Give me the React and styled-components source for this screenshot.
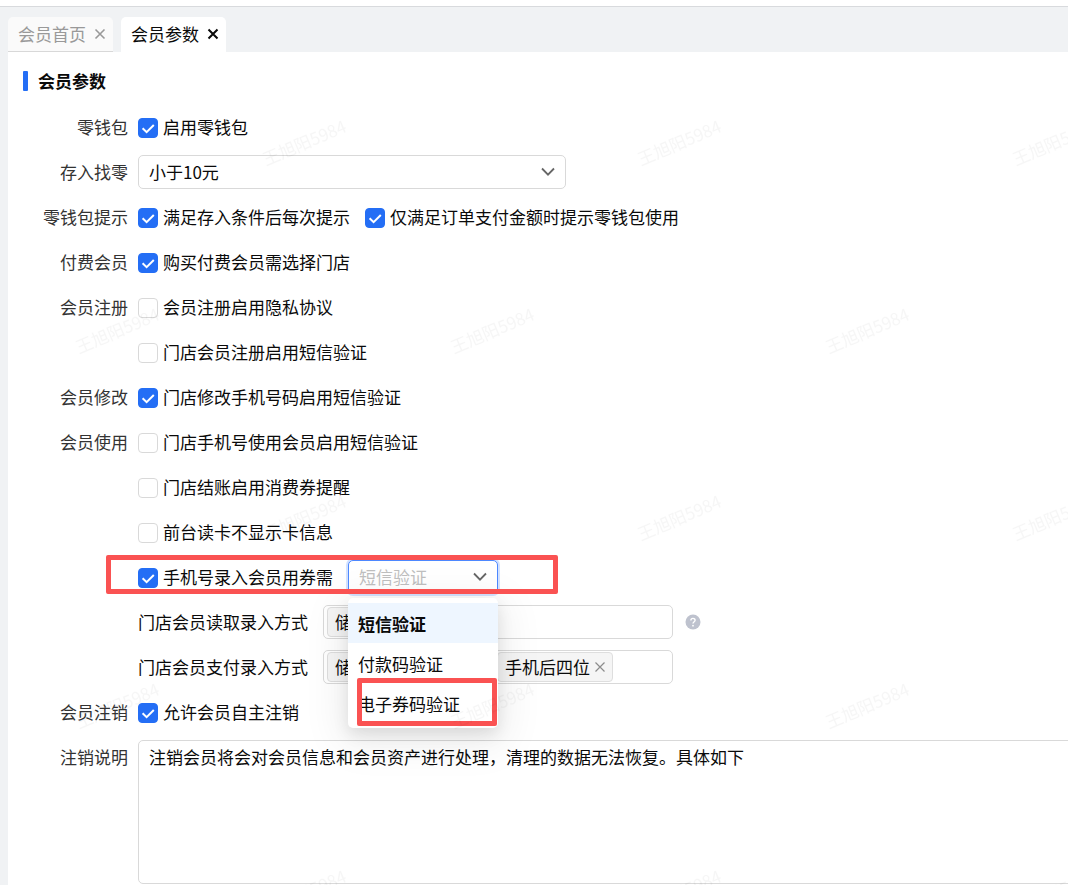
import React from 'react';
import styled, { createGlobalStyle } from 'styled-components';

const GlobalStyle = createGlobalStyle`
	* {
		box-sizing: border-box;
	}
	body {
		margin: 0;
		background: #f0f2f4;
		color: #0a0a0a;
		font-family: 'Noto Sans CJK SC', 'Noto Sans', sans-serif;
		font-size: 17px;
		overflow: hidden;
	}
	button, select, textarea, input {
		margin: 0;
		font: inherit;
		color: inherit;
	}
`;

const Page = styled.div`
	min-height: 100vh;
	display: flex;
	flex-direction: column;
`;
const TopBar = styled.div`
	height: 7px;
	background: #ffffff;
	border-bottom: 1px solid #d8dadd;
`;
const TabBar = styled.nav`
	display: flex;
	gap: 8px;
	padding: 10px 8px 0;
`;
const Tab = styled.div`
	display: flex;
	align-items: center;
	gap: 8px;
	height: 35px;
	padding: 0 7px 0 10px;
	border-radius: 5px 5px 0 0;
	border-bottom: 1px solid ${({ $active }) => ($active ? '#ffffff' : '#d8d8d8')};
	background: ${({ $active }) => ($active ? '#ffffff' : '#fafafa')};
	color: ${({ $active }) => ($active ? '#0a0a0a' : '#999999')};
`;
const TabLink = styled.a`
	color: inherit;
	line-height: 36px;
	text-decoration: none;
`;
const CloseButton = styled.button`
	display: flex;
	padding: 0;
	border: 0;
	background: none;
	color: inherit;
`;
const Panel = styled.main`
	flex: 1;
	margin-left: 8px;
	background: #ffffff;
	overflow: hidden;
`;
const Title = styled.h1`
	display: flex;
	align-items: center;
	gap: 10px;
	margin: 0;
	padding: 15px 15px 15px;
	font-size: 17px;
	line-height: 28px;
	font-weight: bold;
	&::before {
		content: '';
		width: 5px;
		height: 20px;
		border-radius: 1px;
		background: #246ef5;
	}
`;
const Form = styled.form`
	display: flex;
	flex-direction: column;
	gap: 9px;
`;
const Row = styled.div`
	position: relative;
	display: flex;
	align-items: flex-start;
	gap: 10px;
	min-height: 36px;
`;
const RowLabel = styled.label`
	flex: 0 0 120px;
	text-align: right;
	line-height: 34px;
	color: #333333;
`;
const Controls = styled.div`
	flex: 1;
	min-width: 0;
	display: flex;
	gap: 15px;
`;
const CheckLabel = styled.label`
	display: flex;
	align-items: center;
	gap: 5px;
	height: 36px;
	line-height: 34px;
	white-space: nowrap;
`;
const CheckText = styled.span`
	height: 36px;
`;
const CheckBox = styled.span`
	display: grid;
	width: 20px;
	height: 20px;
	& > * {
		grid-area: 1 / 1;
	}
	svg {
		pointer-events: none;
	}
`;
const CheckInput = styled.input`
	appearance: none;
	width: 20px;
	height: 20px;
	border: 1px solid #d9d9d9;
	border-radius: 4px;
	background: #ffffff;
	&:checked {
		border-color: #246ef5;
		background: #246ef5;
	}
	&:not(:checked) + svg {
		display: none;
	}
`;
const FieldLabel = styled.span`
	line-height: 34px;
	white-space: nowrap;
`;
const SelectBox = styled.div`
	position: relative;
	width: ${({ $width }) => $width};
	height: 34px;
	svg {
		position: absolute;
		right: 10px;
		top: 9px;
		pointer-events: none;
	}
`;
const Select = styled.select`
	appearance: none;
	width: 100%;
	height: 34px;
	padding: 0 32px 2px 10px;
	border: 1px solid ${({ $open }) => ($open ? '#4d88ff' : '#d9d9d9')};
	border-radius: 5px;
	outline: none;
	background: #ffffff;
	color: ${({ $open }) => ($open ? '#bfbfbf' : '#0a0a0a')};
	box-shadow: ${({ $open }) => ($open ? '0 0 0 2px #d3e2ff' : 'none')};
`;
const Menu = styled.ul`
	position: absolute;
	z-index: 2;
	top: 38px;
	left: 0;
	width: 100%;
	margin: 0;
	padding: 5px 0;
	list-style: none;
	border-radius: 5px;
	background: #ffffff;
	box-shadow: 0 6px 16px rgba(0, 0, 0, 0.1), 0 9px 40px 8px rgba(0, 0, 0, 0.07);
`;
const Option = styled.li`
	height: 40px;
	padding: 0 10px;
	line-height: 42px;
	font-weight: ${({ $selected }) => ($selected ? 'bold' : 'normal')};
	background: ${({ $selected }) => ($selected ? '#eef6ff' : 'transparent')};
`;
const RowMark = styled.div`
	position: absolute;
	z-index: 3;
	left: 98px;
	top: -5px;
	width: 452px;
	height: 39px;
	border: 5px solid #fa5252;
	border-radius: 2px;
	pointer-events: none;
`;
const OptionMark = styled.div`
	position: absolute;
	z-index: 3;
	left: 9px;
	right: 1px;
	bottom: 2px;
	height: 48px;
	border: 5px solid #fa5252;
	border-radius: 2px;
	pointer-events: none;
`;
const TagBox = styled.div`
	display: flex;
	align-items: center;
	gap: 3px;
	width: 350px;
	height: 34px;
	padding: 0 3px;
	border: 1px solid #d9d9d9;
	border-radius: 5px;
`;
const Tag = styled.span`
	display: flex;
	align-items: center;
	gap: 4px;
	height: 30px;
	padding: 0 6px 0 7px;
	border: 1px solid #dedede;
	border-radius: 4px;
	background: #f5f5f5;
	line-height: 28px;
	white-space: nowrap;
	button {
		color: #8c8c8c;
	}
`;
const Help = styled.button`
	display: flex;
	align-self: center;
	margin-left: -3px;
	padding: 0;
	border: 0;
	background: none;
`;
const TextArea = styled.textarea`
	flex: 0 0 calc(100% + 20px);
	height: 144px;
	padding: 3px 10px;
	border: 1px solid #d9d9d9;
	border-radius: 5px;
	outline: none;
	background: #ffffff;
	line-height: 26px;
	resize: none;
`;
const WatermarkLayer = styled.svg`
	position: fixed;
	z-index: 10;
	inset: 0;
	width: 100%;
	height: 100%;
	pointer-events: none;
`;

const Cross = ({ size = 12, weight = 1 }) => (
	<svg width={size} height={size} viewBox="0 0 12 12" fill="none" stroke="currentColor" strokeWidth={weight}>
		<path d="M1.5 1.5 10.5 10.5M10.5 1.5 1.5 10.5" />
	</svg>
);

const Chevron = () => (
	<svg width="16" height="16" viewBox="0 0 16 16" fill="none" stroke="#666666" strokeWidth="1.8">
		<path d="M2 4.5 8 10.7 14 4.5" />
	</svg>
);

const Check = ({ children, checked }) => (
	<CheckLabel>
		<CheckBox>
			<CheckInput type="checkbox" defaultChecked={checked} />
			<svg width="20" height="20" viewBox="0 0 20 20" fill="none" stroke="#ffffff" strokeWidth="2">
				<path d="M4.6 10.3 8.6 14.2 15.8 7" />
			</svg>
		</CheckBox>
		<CheckText>{children}</CheckText>
	</CheckLabel>
);

const TagField = ({ label, tags }) => (
	<>
		<FieldLabel>{label}</FieldLabel>
		<TagBox role="group" aria-label={label}>
			{tags.map((tag) => (
				<Tag key={tag}>
					{tag}
					<CloseButton type="button" aria-label={`移除${tag}`}>
						<Cross weight={1.2} />
					</CloseButton>
				</Tag>
			))}
		</TagBox>
	</>
);

const FormRow = ({ label, htmlFor, children, mark }) => (
	<Row>
		<RowLabel as={htmlFor ? 'label' : 'span'} htmlFor={htmlFor}>
			{label}
		</RowLabel>
		<Controls>{children}</Controls>
		{mark && <RowMark />}
	</Row>
);

const Watermark = () => (
	<WatermarkLayer aria-hidden="true">
		<defs>
			<pattern id="watermark" width="375" height="375" patternUnits="userSpaceOnUse">
				<g fill="#000000" fillOpacity="0.035" fontSize="17">
					<text transform="translate(266 166) rotate(-23)">王旭阳5984</text>
					<text transform="translate(79 354) rotate(-23)">王旭阳5984</text>
				</g>
			</pattern>
		</defs>
		<rect width="100%" height="100%" fill="url(#watermark)" />
	</WatermarkLayer>
);

const verifyOptions = ['短信验证', '付款码验证', '电子券码验证'];

const App = () => {
	return (
		<Page>
			<GlobalStyle />
			<TopBar />
			<TabBar>
				<Tab>
					<TabLink href="#home">会员首页</TabLink>
					<CloseButton type="button" aria-label="关闭会员首页">
						<Cross weight={1.6} />
					</CloseButton>
				</Tab>
				<Tab $active>
					<TabLink href="#params">会员参数</TabLink>
					<CloseButton type="button" aria-label="关闭会员参数">
						<Cross weight={2} />
					</CloseButton>
				</Tab>
			</TabBar>
			<Panel>
				<Title>会员参数</Title>
				<Form>
					<FormRow label="零钱包">
						<Check checked>启用零钱包</Check>
					</FormRow>
					<FormRow label="存入找零" htmlFor="change">
						<SelectBox $width="428px">
							<Select id="change">
								<option>小于10元</option>
							</Select>
							<Chevron />
						</SelectBox>
					</FormRow>
					<FormRow label="零钱包提示">
						<Check checked>满足存入条件后每次提示</Check>
						<Check checked>仅满足订单支付金额时提示零钱包使用</Check>
					</FormRow>
					<FormRow label="付费会员">
						<Check checked>购买付费会员需选择门店</Check>
					</FormRow>
					<FormRow label="会员注册">
						<Check>会员注册启用隐私协议</Check>
					</FormRow>
					<FormRow>
						<Check>门店会员注册启用短信验证</Check>
					</FormRow>
					<FormRow label="会员修改">
						<Check checked>门店修改手机号码启用短信验证</Check>
					</FormRow>
					<FormRow label="会员使用">
						<Check>门店手机号使用会员启用短信验证</Check>
					</FormRow>
					<FormRow>
						<Check>门店结账启用消费券提醒</Check>
					</FormRow>
					<FormRow>
						<Check>前台读卡不显示卡信息</Check>
					</FormRow>
					<FormRow mark>
						<Check checked>手机号录入会员用券需</Check>
						<SelectBox $width="150px">
							<Select $open aria-label="手机号录入会员用券需">
								{verifyOptions.map((option) => (
									<option key={option}>{option}</option>
								))}
							</Select>
							<Chevron />
							<Menu role="listbox">
								{verifyOptions.map((option, index) => (
									<Option key={option} role="option" aria-selected={index === 0} $selected={index === 0}>
										{option}
									</Option>
								))}
								<OptionMark as="li" role="presentation" />
							</Menu>
						</SelectBox>
					</FormRow>
					<FormRow>
						<TagField label="门店会员读取录入方式" tags={['储值卡', '手机号']} />
						<Help type="button" aria-label="帮助">
							<svg width="16" height="16" viewBox="0 0 16 16">
								<circle cx="8" cy="8" r="7.5" fill="#bec2ce" />
								<path d="M5.9 6.5C5.9 3.7 10.1 3.8 10.1 6.3 10.1 7.8 8 7.8 8 9.6" fill="none" stroke="#ffffff" strokeWidth="1.4" />
								<circle cx="8" cy="11.7" r="0.9" fill="#ffffff" />
							</svg>
						</Help>
					</FormRow>
					<FormRow>
						<TagField label="门店会员支付录入方式" tags={['储值卡', '手机号', '手机后四位']} />
					</FormRow>
					<FormRow label="会员注销">
						<Check checked>允许会员自主注销</Check>
					</FormRow>
					<FormRow label="注销说明" htmlFor="note">
						<TextArea id="note" defaultValue="注销会员将会对会员信息和会员资产进行处理，清理的数据无法恢复。具体如下" />
					</FormRow>
				</Form>
			</Panel>
			<Watermark />
		</Page>
	);
};

export default App;
